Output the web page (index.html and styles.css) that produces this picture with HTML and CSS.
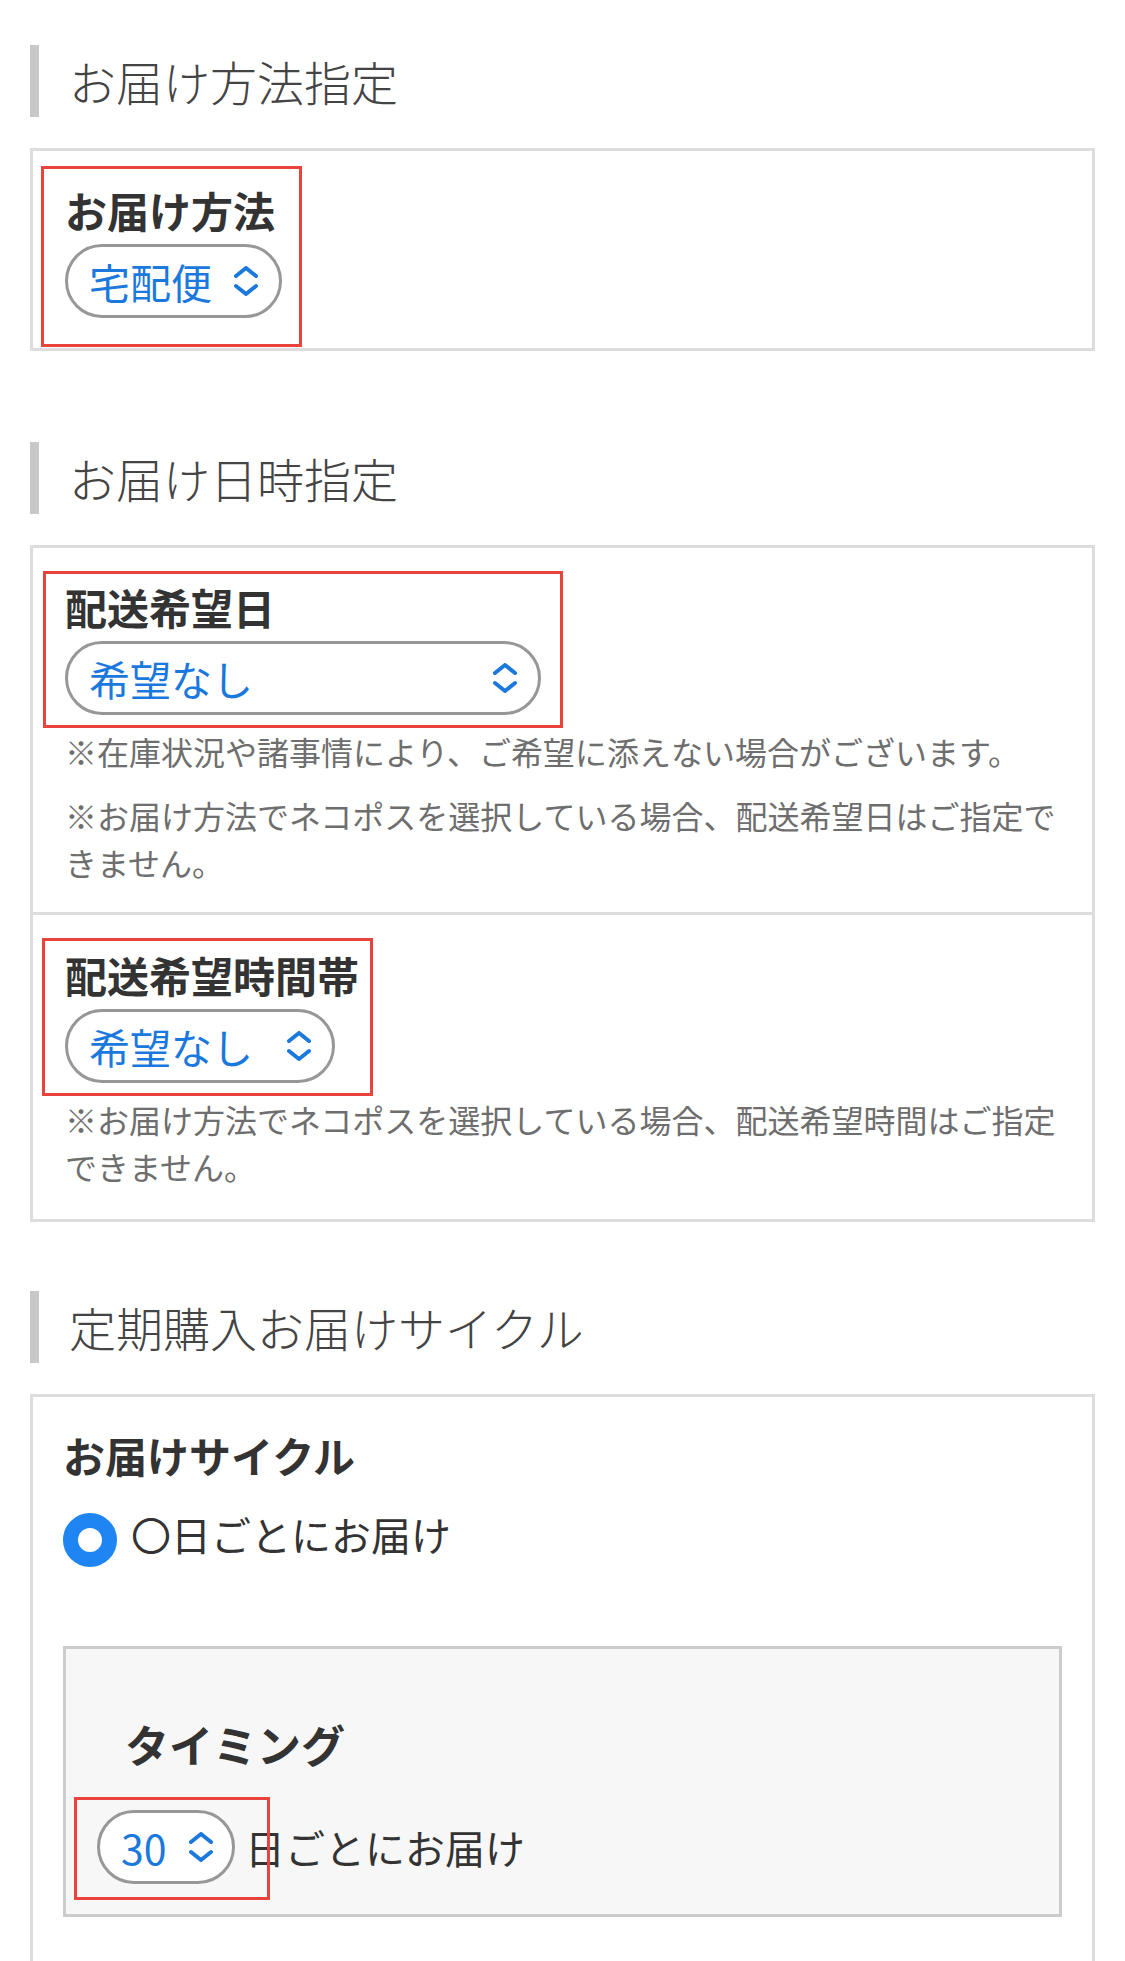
FILE: index.html
```html
<!DOCTYPE html>
<html lang="ja">
<head>
<meta charset="utf-8">
<title>お届け方法指定</title>
<link rel="stylesheet" href="styles.css">
</head>
<body>
<main class="page">
  <section class="sec sec-first">
    <h2 class="sec-title">お届け方法指定</h2>
    <div class="card">
      <div class="cell cell-solo">
        <div class="field">
          <span class="mark mark-method"></span>
          <div class="label">お届け方法</div>
          <div class="select select-method">
            <span class="select-text">宅配便</span>
            <svg class="chev" viewBox="0 0 26 30" width="26" height="30"><path d="M3 10 L13 2 L23 10 M3 20 L13 28 L23 20" fill="none" stroke="currentColor" stroke-width="4" stroke-linecap="round" stroke-linejoin="round"/></svg>
          </div>
        </div>
      </div>
    </div>
  </section>

  <section class="sec sec-second">
    <h2 class="sec-title">お届け日時指定</h2>
    <div class="card">
      <div class="cell">
        <div class="field">
          <span class="mark mark-date"></span>
          <div class="label">配送希望日</div>
          <div class="select select-date">
            <span class="select-text">希望なし</span>
            <svg class="chev" viewBox="0 0 26 30" width="26" height="30"><path d="M3 10 L13 2 L23 10 M3 20 L13 28 L23 20" fill="none" stroke="currentColor" stroke-width="4" stroke-linecap="round" stroke-linejoin="round"/></svg>
          </div>
        </div>
        <p class="note note-first">※在庫状況や諸事情により、ご希望に添えない場合がございます。</p>
        <p class="note">※お届け方法でネコポスを選択している場合、配送希望日はご指定できません。</p>
      </div>
      <div class="cell cell-split">
        <div class="field">
          <span class="mark mark-time"></span>
          <div class="label">配送希望時間帯</div>
          <div class="select select-time">
            <span class="select-text">希望なし</span>
            <svg class="chev" viewBox="0 0 26 30" width="26" height="30"><path d="M3 10 L13 2 L23 10 M3 20 L13 28 L23 20" fill="none" stroke="currentColor" stroke-width="4" stroke-linecap="round" stroke-linejoin="round"/></svg>
          </div>
        </div>
        <p class="note note-first">※お届け方法でネコポスを選択している場合、配送希望時間はご指定できません。</p>
      </div>
    </div>
  </section>

  <section class="sec sec-third">
    <h2 class="sec-title">定期購入お届けサイクル</h2>
    <div class="card">
      <div class="cell cell-cycle">
        <div class="label">お届けサイクル</div>
        <label class="radio-row">
          <span class="radio"></span>
          <span class="radio-text">〇日ごとにお届け</span>
        </label>
        <div class="panel">
          <div class="label label-indent">タイミング</div>
          <div class="timing-row">
            <div class="select-wrap">
              <span class="mark mark-days"></span>
              <div class="select select-days">
                <span class="select-text">30</span>
                <svg class="chev" viewBox="0 0 26 30" width="26" height="30"><path d="M3 10 L13 2 L23 10 M3 20 L13 28 L23 20" fill="none" stroke="currentColor" stroke-width="4" stroke-linecap="round" stroke-linejoin="round"/></svg>
              </div>
            </div>
            <span class="timing-text">日ごとにお届け</span>
          </div>
        </div>
      </div>
    </div>
  </section>
</main>
</body>
</html>
```

FILE: styles.css
```css
* {
  box-sizing: border-box;
}

html, body {
  margin: 0;
  padding: 0;
  background: #ffffff;
}

body {
  font-family: "Noto Sans CJK JP", "Noto Sans", sans-serif;
  color: #333333;
}

.page {
  padding: 45px 30px 0 30px;
}

.sec-second {
  margin-top: 91px;
}

.sec-third {
  margin-top: 69px;
}

.sec-title {
  margin: 0;
  height: 72px;
  line-height: 72px;
  border-left: 9px solid #c8c8c8;
  padding-left: 30px;
  font-family: "Noto Sans CJK JP Light", "Noto Sans CJK JP", "Noto Sans", sans-serif;
  font-size: 47px;
  font-weight: 300;
  color: #444444;
}

.card {
  margin-top: 31px;
  border: 3px solid #dddddd;
  background: #ffffff;
}

.cell {
  padding: 35px 32px 26px 32px;
}

.cell-solo {
  padding-bottom: 30px;
}

.cell-split {
  border-top: 3px solid #dddddd;
  padding-top: 36px;
  padding-bottom: 29px;
}

.field {
  position: relative;
}

.label {
  font-size: 42px;
  line-height: 48px;
  font-weight: 700;
  color: #333333;
}

.select {
  margin-top: 10px;
  height: 74px;
  border: 3px solid #979797;
  border-radius: 37px;
  padding: 0 20px 0 21px;
  display: flex;
  align-items: center;
  justify-content: space-between;
  color: #1b78dc;
  background: #ffffff;
}

.select-text {
  font-size: 41px;
  line-height: 48px;
  color: #1b78dc;
}

.chev {
  display: block;
  flex: none;
  color: #1b78dc;
}

.select-method {
  width: 217px;
}

.select-date {
  width: 476px;
}

.select-time {
  width: 270px;
}

.select-days {
  margin-top: 0;
  width: 138px;
  padding-right: 18px;
}

.mark {
  position: absolute;
  border: 3px solid #e8433d;
  pointer-events: none;
  z-index: 2;
}

.mark-method {
  left: -24px;
  top: -20px;
  width: 261px;
  height: 181px;
}

.mark-date {
  left: -22px;
  top: -12px;
  width: 520px;
  height: 157px;
}

.mark-time {
  left: -23px;
  top: -13px;
  width: 331px;
  height: 158px;
}

.mark-days {
  left: -23px;
  top: -13px;
  width: 196px;
  height: 103px;
}

.note {
  margin: 17px 0 0 0;
  font-size: 32px;
  line-height: 47px;
  color: #6e6e6e;
}

.note-first {
  margin-top: 13px;
}

.cell-cycle {
  padding: 34px 30px 80px 30px;
}

.radio-row {
  display: flex;
  align-items: flex-start;
  gap: 14px;
  margin-top: 31px;
}

.radio {
  flex: none;
  width: 54px;
  height: 54px;
  margin-top: 3px;
  border-radius: 50%;
  border: 15px solid #1e85f2;
  background: #ffffff;
}

.radio-text {
  font-size: 40px;
  line-height: 48px;
  color: #333333;
}

.panel {
  margin-top: 79px;
  border: 3px solid #cccccc;
  background: #f7f7f7;
  padding: 71px 31px 30px 31px;
}

.label-indent {
  padding-left: 28px;
  font-size: 44px;
}

.timing-row {
  margin-top: 42px;
  display: flex;
  align-items: center;
}

.select-wrap {
  position: relative;
}

.timing-text {
  margin-left: 10px;
  font-size: 40px;
  line-height: 48px;
  color: #333333;
}
```
